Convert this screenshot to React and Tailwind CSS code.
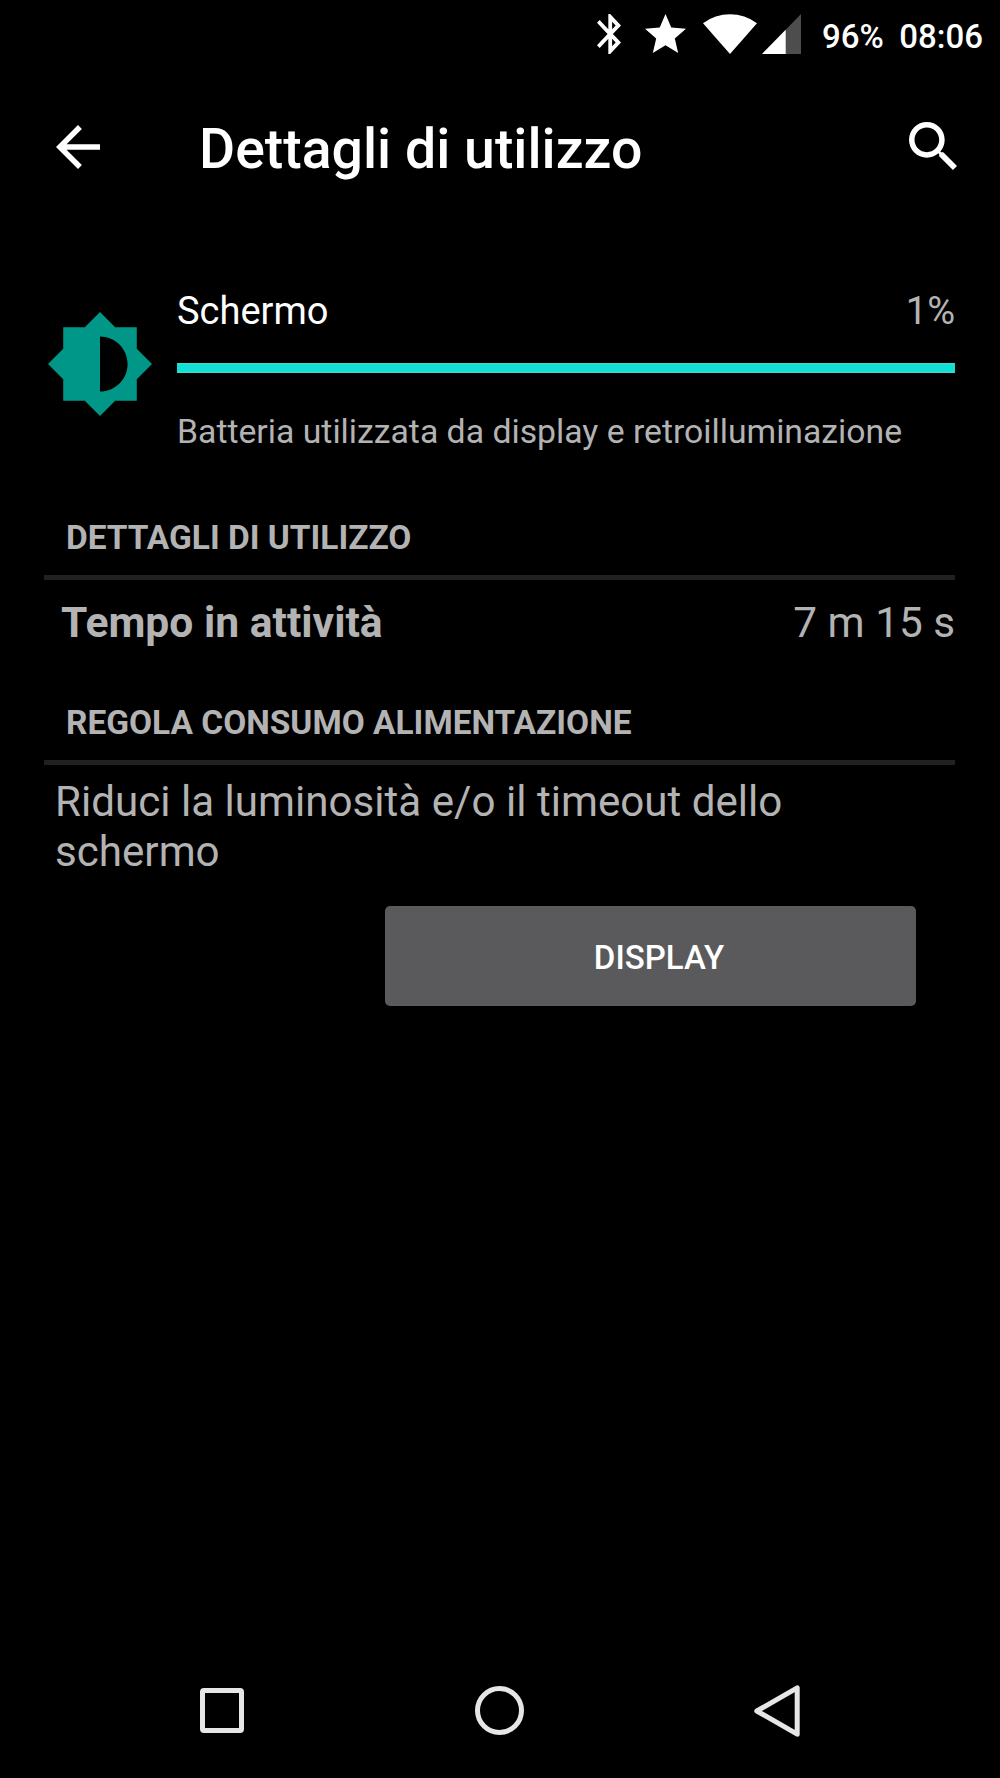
import React from "react";

function StatusBar() {
  return (
    <header className="flex h-[68px] shrink-0 items-center pl-[597px] text-[33px] font-medium text-white">
      <svg className="h-[40px] w-[24px] shrink-0" viewBox="5 2 12.71 20" preserveAspectRatio="none" fill="currentColor">
        <path d="M17.71 7.71L12 2h-1v7.59L6.41 5 5 6.41 10.59 12 5 17.59 6.41 19 11 14.41V22h1l5.71-5.71-4.3-4.29 4.3-4.29zM13 5.83l1.88 1.88L13 9.59V5.83zm1.88 10.46L13 18.17v-3.76l1.88 1.88z" />
      </svg>
      <svg className="mb-[2px] ml-[24px] h-[39px] w-[41px] shrink-0" viewBox="2 2 20 19" preserveAspectRatio="none" fill="currentColor">
        <path d="M12 17.27L18.18 21l-1.64-7.03L22 9.24l-7.19-.61L12 2 9.19 8.63 2 9.24l5.46 4.73L5.82 21z" />
      </svg>
      <svg className="ml-[17px] h-[40px] w-[54px] shrink-0" viewBox="0 0 54 40" fill="currentColor">
        <path d="M27 40 0 9.3A45 45 0 0 1 54 9.3Z" />
      </svg>
      <svg className="ml-[5px] h-[40px] w-[39px] shrink-0" viewBox="0 0 39 40">
        <path d="M0 40 39 0V40Z" fill="#4d4d4d" />
        <path d="M0 40 23.7 15.7V40Z" fill="currentColor" />
      </svg>
      <span className="ml-[21px] mt-[5px] leading-[40px]">96%</span>
      <span className="ml-[15.5px] mt-[5px] leading-[40px]">08:06</span>
    </header>
  );
}

function Toolbar() {
  return (
    <div className="mt-[36px] flex h-[84px] shrink-0 items-center pl-[55.5px] pr-[43.5px] text-white">
      <svg className="mt-[1.5px] h-[44px] w-[44px] shrink-0" viewBox="4 4 16 16" fill="currentColor">
        <path d="M20 11H7.83l5.59-5.59L12 4l-8 8 8 8 1.41-1.41L7.83 13H20v-2z" />
      </svg>
      <h1 className="ml-[99.5px] mt-[8px] whitespace-nowrap text-[55.4px] font-medium leading-[66px]">
        Dettagli di utilizzo
      </h1>
      <svg className="ml-auto h-[48px] w-[48px] shrink-0" viewBox="3 3 17.49 17.49" fill="currentColor">
        <path d="M15.5 14h-.79l-.28-.27A6.471 6.471 0 0 0 16 9.5 6.5 6.5 0 1 0 9.5 16c1.61 0 3.09-.59 4.23-1.57l.27.28v.79l5 4.99L20.49 19l-4.99-5zm-6 0C7.01 14 5 11.99 5 9.5S7.01 5 9.5 5 14 7.01 14 9.5 11.99 14 9.5 14z" />
      </svg>
    </div>
  );
}

function UsageSummary() {
  return (
    <section className="mt-[101px] flex h-[163px] shrink-0 items-start pl-[47.5px] pr-[45px]">
      <svg className="mt-[23.3px] h-[104px] w-[104px] shrink-0 text-[#009688]" viewBox="0.69 0.69 22.62 22.62" fill="currentColor">
        <path d="M20 15.31L23.31 12 20 8.69V4h-4.69L12 .69 8.69 4H4v4.69L.69 12 4 15.31V20h4.69L12 23.31 15.31 20H20v-4.69zM12 18V6c3.31 0 6 2.69 6 6s-2.69 6-6 6z" />
      </svg>
      <div className="ml-[25.5px] flex flex-1 flex-col">
        <div className="flex justify-between text-[38px] leading-[45px]">
          <span className="text-white">Schermo</span>
          <span>1%</span>
        </div>
        <div className="mt-[29px] h-[10px] border-y border-[#4cd3cb] bg-[#14dfd6]" />
        <p className="mt-[39px] whitespace-nowrap text-[33.75px] leading-[40px]">
          Batteria utilizzata da display e retroilluminazione
        </p>
      </div>
    </section>
  );
}

function SectionTitle({ children }) {
  return (
    <h2 className="h-[62px] shrink-0 whitespace-nowrap border-b-[5px] border-[#212121] pl-[22px] text-[33.45px] font-bold leading-[40px]">
      {children}
    </h2>
  );
}

function NavigationBar() {
  return (
    <nav className="mt-auto flex h-[135px] shrink-0 items-center justify-between pl-[199.5px] pr-[200px] text-[#e6e6e6]">
      <span className="h-[45px] w-[44.5px] rounded-[4px] border-[5px] border-current" />
      <span className="ml-[1px] h-[49px] w-[49px] rounded-full border-[5px] border-current" />
      <svg className="h-[52px] w-[46px]" viewBox="0 0 46 52" fill="none" stroke="currentColor" strokeWidth="5" strokeLinejoin="round">
        <path d="M43.2 2.8V49.2L2.8 26Z" />
      </svg>
    </nav>
  );
}

export default function App() {
  return (
    <div className="flex h-[1778px] w-[1000px] flex-col overflow-hidden bg-black font-['Roboto',sans-serif] text-[#b3b3b3]">
      <StatusBar />
      <Toolbar />
      <UsageSummary />
      <main className="mt-[66px] flex flex-col pl-[44px] pr-[45px]">
        <SectionTitle>DETTAGLI DI UTILIZZO</SectionTitle>
        <div className="mt-[17px] flex justify-between pl-[17px] text-[42.3px] leading-[50px]">
          <span className="text-[42.6px] font-bold">Tempo in attività</span>
          <span className="pt-px">7 m 15 s</span>
        </div>
        <div className="mt-[55px] flex flex-col">
          <SectionTitle>REGOLA CONSUMO ALIMENTAZIONE</SectionTitle>
        </div>
        <p className="mt-[12px] w-[760px] pl-[11px] text-[42.15px] leading-[50px]">
          Riduci la luminosità e/o il timeout dello schermo
        </p>
        <button className="ml-[341px] mt-[29px] h-[100px] w-[531px] rounded-[5px] bg-[#5a5a5c] pl-[17px] pt-[3px] text-[33px] font-medium text-white">
          DISPLAY
        </button>
      </main>
      <NavigationBar />
    </div>
  );
}
